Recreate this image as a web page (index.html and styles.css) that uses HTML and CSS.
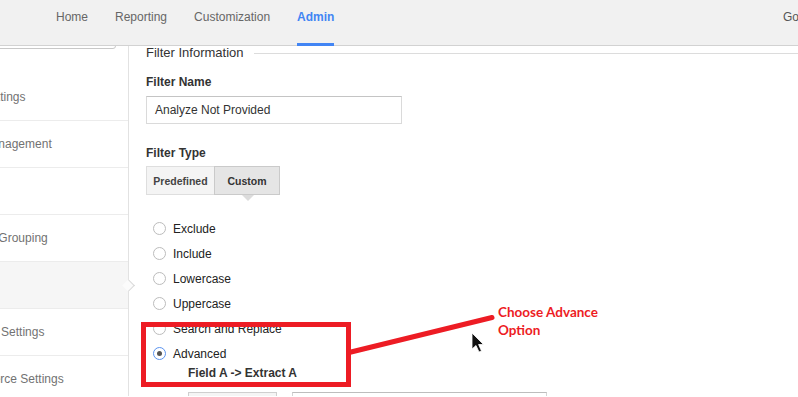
FILE: index.html
```html
<!DOCTYPE html>
<html lang="en">
<head>
  <meta charset="UTF-8">
  <title>Admin - Filter</title>
  <link rel="stylesheet" href="styles.css">
</head>
<body>

  <header class="topbar">
    <nav class="tabs">
      <a class="tab">Home</a>
      <a class="tab">Reporting</a>
      <a class="tab">Customization</a>
      <a class="tab active">Admin</a>
    </nav>
    <div class="account">Google Analytics</div>
  </header>

  <div class="layout">
    <aside class="sidebar">
      <div class="search"></div>
      <ul class="menu">
        <li><span>View Settings</span></li>
        <li><span>User Management</span></li>
        <li><span>Goals</span></li>
        <li><span>Content Grouping</span></li>
        <li class="selected"><span>Filters</span></li>
        <li><span>Channel Settings</span></li>
        <li><span>Ecommerce Settings</span></li>
      </ul>
    </aside>

    <main class="content">
      <div class="legend"><span>Filter Information</span><i class="rule"></i></div>

      <label class="field-label name">Filter Name</label>
      <div class="text-input">Analyze Not Provided</div>

      <label class="field-label type">Filter Type</label>
      <div class="btn-group">
        <div class="seg predef">Predefined</div>
        <div class="seg custom">Custom</div>
      </div>

      <div class="radios">
        <div class="radio"><span class="dot"></span>Exclude</div>
        <div class="radio"><span class="dot"></span>Include</div>
        <div class="radio"><span class="dot"></span>Lowercase</div>
        <div class="radio"><span class="dot"></span>Uppercase</div>
        <div class="radio"><span class="dot"></span>Search and Replace</div>
        <div class="radio checked"><span class="dot"></span>Advanced</div>
      </div>

      <div class="extract">Field A -&gt; Extract A</div>

      <div class="bottom-row">
        <div class="btn-plain"></div>
        <div class="input-plain"></div>
      </div>
    </main>
  </div>

  <!-- annotation drawn on top of the screenshot -->
  <div class="annotations">
    <div class="callout-box"></div>
    <svg class="callout-svg" width="798" height="397" viewBox="0 0 798 397">
      <line x1="349" y1="352.5" x2="492" y2="317.5" stroke="#ed1c24" stroke-width="5" stroke-linecap="round"/>
      <path d="M472 333 L472 349 L476 345.5 L479 352 L481.5 351 L478.6 344.5 L483.5 344.5 Z" fill="#111" stroke="#fff" stroke-width="0.8"/>
    </svg>
    <div class="callout-text">Choose Advance<br>Option</div>
  </div>

</body>
</html>
```

FILE: styles.css
```css
body {
  margin: 0;
  width: 798px;
  height: 397px;
  overflow: hidden;
  position: relative;
  font-family: "Liberation Sans", Arial, sans-serif;
  background: #fff;
}
.topbar {
  position: relative;
  z-index: 2;
  height: 46px;
  box-sizing: border-box;
  background: #f1f1f1;
  border-bottom: 1px solid #d2d2d2;
  display: flex;
}
.tabs {
  display: flex;
  padding-left: 56px;
}
.tab {
  height: 46px;
  box-sizing: border-box;
  padding-top: 10px;
  margin-right: 27px;
  font-size: 12px;
  line-height: 14px;
  color: #666;
  border-bottom: 3px solid transparent;
}
.tab.active {
  color: #4285f4;
  font-weight: bold;
  border-bottom-color: #4285f4;
}
.account {
  margin-left: auto;
  width: 15px;
  overflow: hidden;
  white-space: nowrap;
  padding-top: 10px;
  font-size: 12px;
  line-height: 14px;
  color: #555;
}
.layout {
  display: flex;
  margin-top: -4px;
  height: 354px;
  overflow: hidden;
}
.sidebar {
  width: 128px;
  flex: none;
  border-right: 1px solid #e2e2e2;
}
.search {
  height: 27px;
  width: 126px;
  margin-top: -20px;
  margin-left: -10px;
  box-sizing: border-box;
  border: 1px solid #c8c8c8;
  border-radius: 3px;
  background: #fff;
}
.menu {
  list-style: none;
  margin: 25px 0 0 0;
  padding: 0;
}
.menu li {
  position: relative;
  height: 46px;
  border-bottom: 1px solid #ececec;
  display: flex;
  align-items: center;
  font-size: 12px;
  color: #727272;
  white-space: nowrap;
}
.menu li span {
  margin-left: -47px;
}
.menu li.selected {
  background: #f6f6f6;
}
.menu li.selected::after {
  content: "";
  position: absolute;
  right: -4.5px;
  top: 19px;
  width: 8px;
  height: 8px;
  background: #fbfbfb;
  border-top: 1px solid #d8d8d8;
  border-right: 1px solid #d8d8d8;
  transform: rotate(45deg);
}
.content {
  flex: 1;
  padding-left: 17px;
}
.legend {
  display: flex;
  align-items: center;
  height: 20px;
  font-size: 13px;
  color: #333;
}
.legend .rule {
  flex: 1;
  height: 1px;
  background: #dcdcdc;
  margin-left: 10px;
  margin-top: 2px;
}
.field-label {
  display: block;
  font-size: 12px;
  line-height: 14px;
  font-weight: bold;
  color: #333;
}
.field-label.name {
  margin-top: 13px;
}
.field-label.type {
  margin-top: 22px;
}
.text-input {
  margin-top: 7px;
  width: 256px;
  height: 28px;
  box-sizing: border-box;
  border: 1px solid #dadada;
  border-top-color: #c4c4c4;
  padding-left: 8px;
  font-size: 12px;
  line-height: 26px;
  color: #333;
}
.btn-group {
  display: flex;
  margin-top: 6px;
}
.seg {
  height: 29px;
  box-sizing: border-box;
  display: flex;
  align-items: center;
  justify-content: center;
  font-size: 10.5px;
  font-weight: bold;
  color: #444;
  border: 1px solid #dedede;
  background: #f4f4f4;
}
.seg.predef {
  width: 69px;
}
.seg.custom {
  position: relative;
  width: 66px;
  margin-left: -1px;
  color: #333;
  background: #e5e5e5;
  border-color: #cacaca;
}
.seg.custom::after {
  content: "";
  position: absolute;
  left: 27px;
  top: 28px;
  border-top: 6px solid #dcdcdc;
  border-left: 6px solid transparent;
  border-right: 6px solid transparent;
}
.radios {
  margin-top: 21px;
}
.radio {
  display: flex;
  align-items: center;
  gap: 7px;
  height: 25px;
  padding-left: 7px;
  font-size: 12px;
  color: #222;
}
.radio .dot {
  width: 13px;
  height: 13px;
  box-sizing: border-box;
  border: 1px solid #bcbcbc;
  border-radius: 50%;
  background: #fff;
  display: flex;
  align-items: center;
  justify-content: center;
}
.radio.checked .dot {
  border-color: #5a93f0;
}
.radio.checked .dot::after {
  content: "";
  width: 5px;
  height: 5px;
  border-radius: 50%;
  background: #555;
}
.extract {
  margin-top: 0;
  padding-left: 42px;
  font-size: 12px;
  line-height: 14px;
  font-weight: bold;
  color: #333;
}
.bottom-row {
  display: flex;
  gap: 15px;
  margin-left: 42px;
  margin-top: 12px;
}
.btn-plain {
  width: 89px;
  height: 28px;
  box-sizing: border-box;
  border: 1px solid #cfcfcf;
  background: #f5f5f5;
}
.input-plain {
  width: 255px;
  height: 28px;
  box-sizing: border-box;
  border: 1px solid #d4d4d4;
  border-top-color: #bdbdbd;
}
.annotations {
  position: absolute;
  left: 0;
  top: 0;
  width: 798px;
  height: 397px;
  z-index: 3;
  pointer-events: none;
}
.callout-box {
  position: absolute;
  left: 141px;
  top: 322px;
  width: 210px;
  height: 65px;
  box-sizing: border-box;
  border: 5px solid #ed1c24;
}
.callout-svg {
  position: absolute;
  left: 0;
  top: 0;
}
.callout-text {
  position: absolute;
  left: 498px;
  top: 303px;
  font-family: Lato, "Open Sans", sans-serif;
  font-weight: bold;
  font-size: 13.5px;
  line-height: 18px;
  color: #ed1c24;
}
```
